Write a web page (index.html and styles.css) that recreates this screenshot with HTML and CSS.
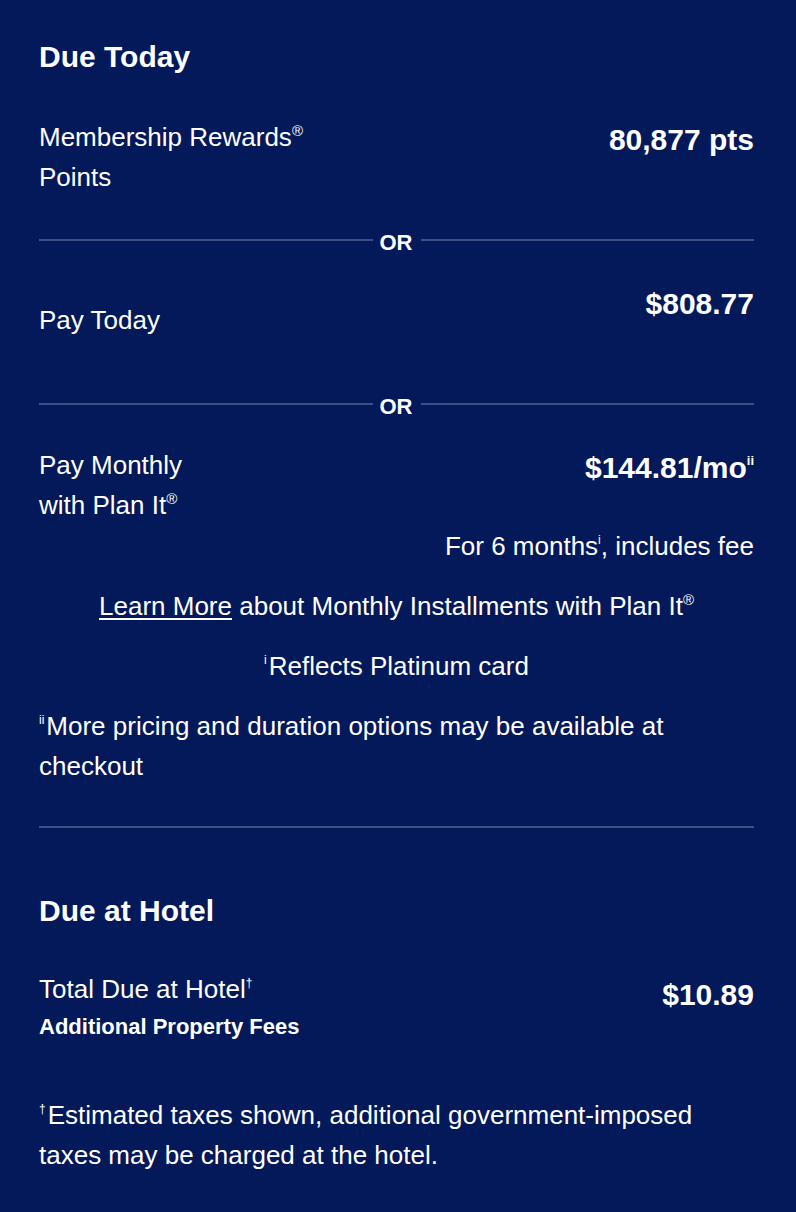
FILE: index.html
```html
<!DOCTYPE html>
<html lang="en">
<head>
<meta charset="utf-8">
<title>Due Today</title>
<link rel="stylesheet" href="styles.css">
</head>
<body>
<main class="panel">
  <h2 class="heading">Due Today</h2>

  <div class="row row-first">
    <div class="label">Membership Rewards<sup class="mark">®</sup><br>Points</div>
    <div class="price">80,877 pts</div>
  </div>

  <div class="or"><span class="or-line"></span><span class="or-label">OR</span><span class="or-line"></span></div>

  <div class="row">
    <div class="label label-mid">Pay Today</div>
    <div class="price">$808.77</div>
  </div>

  <div class="or"><span class="or-line"></span><span class="or-label">OR</span><span class="or-line"></span></div>

  <div class="row">
    <div class="label">Pay Monthly<br>with Plan It<sup class="mark">®</sup></div>
    <div class="price">$144.81/mo<sup class="mark-sm">ii</sup></div>
  </div>

  <p class="note note-right">For 6 months<sup class="mark-sm">i</sup>, includes fee</p>
  <p class="note note-center"><a class="link" href="#">Learn More</a> about Monthly Installments with Plan It<sup class="mark">®</sup></p>
  <p class="note note-center"><sup class="mark-sm lead">i</sup>Reflects Platinum card</p>
  <p class="note"><sup class="mark-sm lead">ii</sup>More pricing and duration options may be available at checkout</p>

  <hr class="divider">

  <h2 class="heading heading-hotel">Due at Hotel</h2>

  <div class="row row-hotel">
    <div class="label">
      <div>Total Due at Hotel<sup class="mark-sm">†</sup></div>
      <div class="sublabel">Additional Property Fees</div>
    </div>
    <div class="price price-hotel">$10.89</div>
  </div>

  <p class="note note-foot"><sup class="mark-sm lead">†</sup>Estimated taxes shown, additional government-imposed taxes may be charged at the hotel.</p>
</main>
</body>
</html>
```

FILE: styles.css
```css
html, body {
  margin: 0;
  padding: 0;
  background: #04195a;
}

.panel {
  box-sizing: border-box;
  width: 796px;
  min-height: 1212px;
  padding: 37px 42px 36px 39px;
  color: #ffffff;
  font-family: "Liberation Sans", Arial, Helvetica, sans-serif;
  font-size: 26px;
  line-height: 40px;
}

.heading {
  margin: 0;
  font-size: 30px;
  font-weight: 700;
  line-height: 40px;
}

.heading-hotel {
  margin-top: 63px;
}

.row {
  display: flex;
  justify-content: space-between;
  align-items: flex-start;
  min-height: 80px;
}

.row-first {
  margin-top: 40px;
}

.label {
  font-size: 26px;
  line-height: 40px;
}

.label-mid {
  margin-top: 19px;
}

.price {
  margin-top: 3px;
  font-size: 30px;
  font-weight: 700;
  line-height: 40px;
  white-space: nowrap;
}

.mark {
  font-size: 15px;
  line-height: 0;
  vertical-align: 10px;
}

.mark-sm {
  font-size: 12px;
  line-height: 0;
  vertical-align: 11px;
}

.lead {
  margin-right: 2px;
}

.price .mark-sm {
  font-size: 13px;
  font-weight: 700;
  vertical-align: 13px;
}

.or {
  display: flex;
  align-items: center;
  margin: 29px 0 27px;
}

.or-line {
  flex: 1;
  height: 2px;
  background: #3f4f85;
}

.or-label {
  margin: 6px 8px 0 7px;
  font-size: 22px;
  font-weight: 700;
  line-height: 22px;
}

.note {
  margin: 20px 0 0;
  font-size: 26px;
  line-height: 40px;
}

.note-right {
  margin-top: 1px;
  text-align: right;
}

.note-center {
  text-align: center;
}

.link {
  color: #ffffff;
  text-decoration: underline;
  text-underline-offset: 3px;
}

.divider {
  margin: 40px 0 0;
  height: 2px;
  border: 0;
  background: #3f4f85;
}

.row-hotel {
  margin-top: 38px;
  min-height: 0;
}

.sublabel {
  margin-top: 2px;
  font-size: 22px;
  font-weight: 700;
  line-height: 32px;
}

.price-hotel {
  margin-top: 6px;
}

.note-foot {
  margin-top: 52px;
}
```
